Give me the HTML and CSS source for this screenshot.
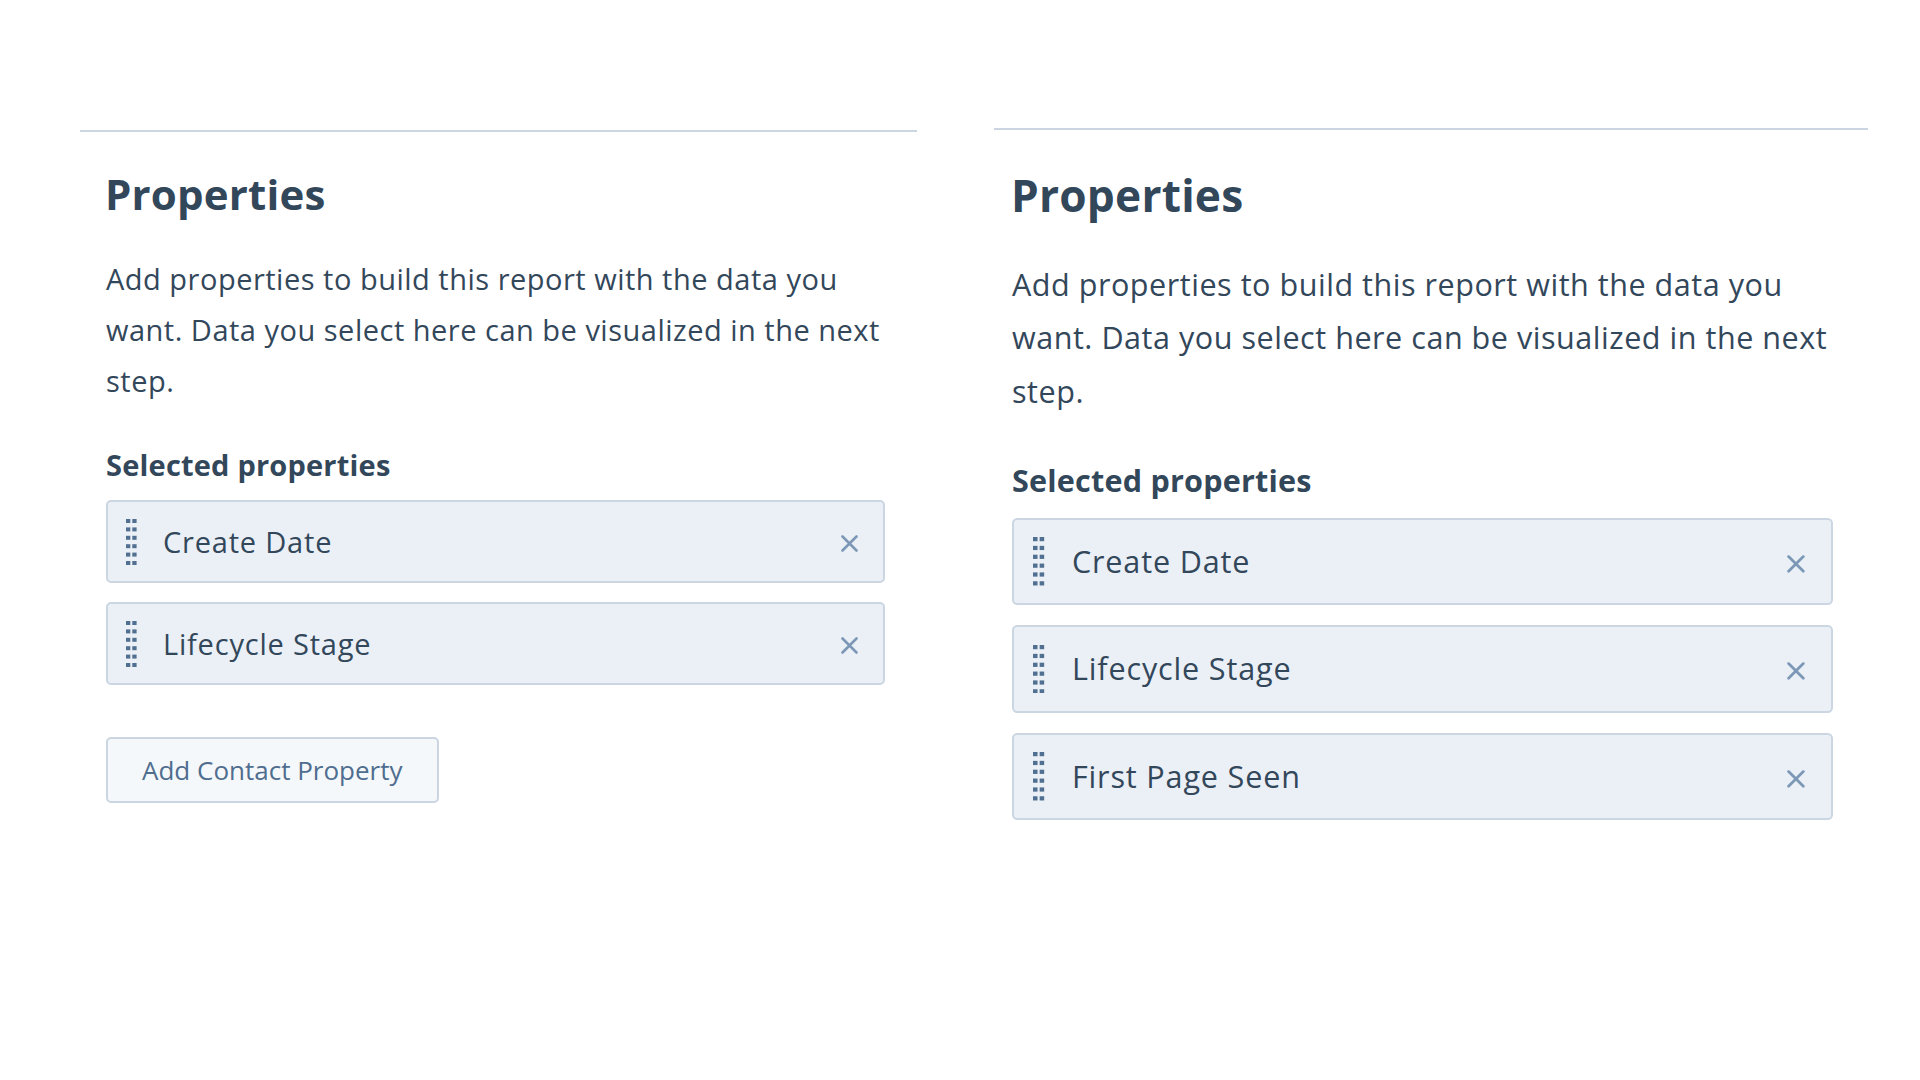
FILE: index.html
```html
<!DOCTYPE html>
<html lang="en">
<head>
<meta charset="utf-8">
<title>Properties</title>
<link rel="stylesheet" href="styles.css">
</head>
<body>
<div class="page">
  <section class="panel panel-left">
    <div class="content">
      <h2 class="title">Properties</h2>
      <p class="desc">Add properties to build this report with the data you want. Data you select here can be visualized in the next step.</p>
      <h3 class="subtitle">Selected properties</h3>
      <ul class="items">
        <li class="item">
          <svg class="handle" width="11" height="46" viewBox="0 0 11 46"><g fill="#516f90"><rect x="0" y="0" width="4.3" height="4"/><rect x="6.3" y="0" width="4.3" height="4"/><rect x="0" y="8.4" width="4.3" height="4"/><rect x="6.3" y="8.4" width="4.3" height="4"/><rect x="0" y="16.8" width="4.3" height="4"/><rect x="6.3" y="16.8" width="4.3" height="4"/><rect x="0" y="25.2" width="4.3" height="4"/><rect x="6.3" y="25.2" width="4.3" height="4"/><rect x="0" y="33.6" width="4.3" height="4"/><rect x="6.3" y="33.6" width="4.3" height="4"/><rect x="0" y="42" width="4.3" height="4"/><rect x="6.3" y="42" width="4.3" height="4"/></g></svg>
          <span class="item-label">Create Date</span>
          <svg class="remove" width="17" height="17" viewBox="0 0 17 17"><path d="M1.5 1.5 L15.5 15.5 M15.5 1.5 L1.5 15.5" stroke="#7c98b6" stroke-width="2.6" stroke-linecap="round" fill="none"/></svg>
        </li>
        <li class="item">
          <svg class="handle" width="11" height="46" viewBox="0 0 11 46"><g fill="#516f90"><rect x="0" y="0" width="4.3" height="4"/><rect x="6.3" y="0" width="4.3" height="4"/><rect x="0" y="8.4" width="4.3" height="4"/><rect x="6.3" y="8.4" width="4.3" height="4"/><rect x="0" y="16.8" width="4.3" height="4"/><rect x="6.3" y="16.8" width="4.3" height="4"/><rect x="0" y="25.2" width="4.3" height="4"/><rect x="6.3" y="25.2" width="4.3" height="4"/><rect x="0" y="33.6" width="4.3" height="4"/><rect x="6.3" y="33.6" width="4.3" height="4"/><rect x="0" y="42" width="4.3" height="4"/><rect x="6.3" y="42" width="4.3" height="4"/></g></svg>
          <span class="item-label">Lifecycle Stage</span>
          <svg class="remove" width="17" height="17" viewBox="0 0 17 17"><path d="M1.5 1.5 L15.5 15.5 M15.5 1.5 L1.5 15.5" stroke="#7c98b6" stroke-width="2.6" stroke-linecap="round" fill="none"/></svg>
        </li>
      </ul>
      <button class="btn" type="button">Add Contact Property</button>
    </div>
  </section>

  <section class="panel panel-right">
    <div class="content content-zoom">
      <h2 class="title">Properties</h2>
      <p class="desc">Add properties to build this report with the data you want. Data you select here can be visualized in the next step.</p>
      <h3 class="subtitle">Selected properties</h3>
      <ul class="items">
        <li class="item">
          <svg class="handle" width="11" height="46" viewBox="0 0 11 46"><g fill="#516f90"><rect x="0" y="0" width="4.3" height="4"/><rect x="6.3" y="0" width="4.3" height="4"/><rect x="0" y="8.4" width="4.3" height="4"/><rect x="6.3" y="8.4" width="4.3" height="4"/><rect x="0" y="16.8" width="4.3" height="4"/><rect x="6.3" y="16.8" width="4.3" height="4"/><rect x="0" y="25.2" width="4.3" height="4"/><rect x="6.3" y="25.2" width="4.3" height="4"/><rect x="0" y="33.6" width="4.3" height="4"/><rect x="6.3" y="33.6" width="4.3" height="4"/><rect x="0" y="42" width="4.3" height="4"/><rect x="6.3" y="42" width="4.3" height="4"/></g></svg>
          <span class="item-label">Create Date</span>
          <svg class="remove" width="17" height="17" viewBox="0 0 17 17"><path d="M1.5 1.5 L15.5 15.5 M15.5 1.5 L1.5 15.5" stroke="#7c98b6" stroke-width="2.6" stroke-linecap="round" fill="none"/></svg>
        </li>
        <li class="item">
          <svg class="handle" width="11" height="46" viewBox="0 0 11 46"><g fill="#516f90"><rect x="0" y="0" width="4.3" height="4"/><rect x="6.3" y="0" width="4.3" height="4"/><rect x="0" y="8.4" width="4.3" height="4"/><rect x="6.3" y="8.4" width="4.3" height="4"/><rect x="0" y="16.8" width="4.3" height="4"/><rect x="6.3" y="16.8" width="4.3" height="4"/><rect x="0" y="25.2" width="4.3" height="4"/><rect x="6.3" y="25.2" width="4.3" height="4"/><rect x="0" y="33.6" width="4.3" height="4"/><rect x="6.3" y="33.6" width="4.3" height="4"/><rect x="0" y="42" width="4.3" height="4"/><rect x="6.3" y="42" width="4.3" height="4"/></g></svg>
          <span class="item-label">Lifecycle Stage</span>
          <svg class="remove" width="17" height="17" viewBox="0 0 17 17"><path d="M1.5 1.5 L15.5 15.5 M15.5 1.5 L1.5 15.5" stroke="#7c98b6" stroke-width="2.6" stroke-linecap="round" fill="none"/></svg>
        </li>
        <li class="item">
          <svg class="handle" width="11" height="46" viewBox="0 0 11 46"><g fill="#516f90"><rect x="0" y="0" width="4.3" height="4"/><rect x="6.3" y="0" width="4.3" height="4"/><rect x="0" y="8.4" width="4.3" height="4"/><rect x="6.3" y="8.4" width="4.3" height="4"/><rect x="0" y="16.8" width="4.3" height="4"/><rect x="6.3" y="16.8" width="4.3" height="4"/><rect x="0" y="25.2" width="4.3" height="4"/><rect x="6.3" y="25.2" width="4.3" height="4"/><rect x="0" y="33.6" width="4.3" height="4"/><rect x="6.3" y="33.6" width="4.3" height="4"/><rect x="0" y="42" width="4.3" height="4"/><rect x="6.3" y="42" width="4.3" height="4"/></g></svg>
          <span class="item-label">First Page Seen</span>
          <svg class="remove" width="17" height="17" viewBox="0 0 17 17"><path d="M1.5 1.5 L15.5 15.5 M15.5 1.5 L1.5 15.5" stroke="#7c98b6" stroke-width="2.6" stroke-linecap="round" fill="none"/></svg>
        </li>
      </ul>
    </div>
  </section>
</div>
</body>
</html>
```

FILE: styles.css
```css
html, body {
  margin: 0;
  padding: 0;
  background: #ffffff;
}

body {
  font-family: "Open Sans", "Liberation Sans", sans-serif;
  color: #33475b;
  width: 1920px;
  height: 1080px;
  overflow: hidden;
}

.page {
  display: flex;
  align-items: flex-start;
  gap: 77px;
  padding: 130px 0 0 80px;
}

.panel {
  border-top: 2px solid #cbd6e2;
}

.panel-left {
  width: 837px;
  padding-left: 26px;
  box-sizing: border-box;
}

.panel-right {
  width: 874px;
  margin-top: -2px;
  padding-left: 18px;
  box-sizing: border-box;
}

.content {
  width: 779px;
}

.content-zoom {
  zoom: 1.054;
}

.title {
  margin: 37px 0 0 -1px;
  font-size: 42px;
  line-height: 50px;
  font-weight: 700;
  color: #33475b;
  letter-spacing: 0.2px;
}

.desc {
  margin: 34px 0 0 0;
  font-size: 29px;
  line-height: 51px;
  font-weight: 400;
  color: #33475b;
  letter-spacing: 0.5px;
  width: 792px;
}

.subtitle {
  margin: 41px 0 0 0;
  font-size: 29px;
  line-height: 36px;
  font-weight: 700;
  color: #33475b;
  letter-spacing: 0.2px;
}

.items {
  list-style: none;
  margin: 17px 0 0 0;
  padding: 0;
  display: flex;
  flex-direction: column;
  gap: 19px;
}

.item {
  display: flex;
  align-items: center;
  box-sizing: border-box;
  height: 83px;
  background: #eaf0f6;
  border: 2px solid #cbd6e2;
  border-radius: 5px;
  padding: 0 25px 0 18px;
}

.handle {
  flex: none;
  display: block;
}

.item-label {
  flex: 1;
  margin-left: 26px;
  font-size: 29px;
  line-height: 36px;
  color: #33475b;
  letter-spacing: 0.8px;
}

.remove {
  flex: none;
  display: block;
  margin-top: 4px;
}

.btn {
  margin-top: 52px;
  height: 66px;
  box-sizing: border-box;
  padding: 0 34px;
  background: #f5f8fa;
  border: 2px solid #cbd6e2;
  border-radius: 5px;
  font-family: "Open Sans", "Liberation Sans", sans-serif;
  font-size: 26px;
  color: #4f6d8f;
  cursor: pointer;
}
```
